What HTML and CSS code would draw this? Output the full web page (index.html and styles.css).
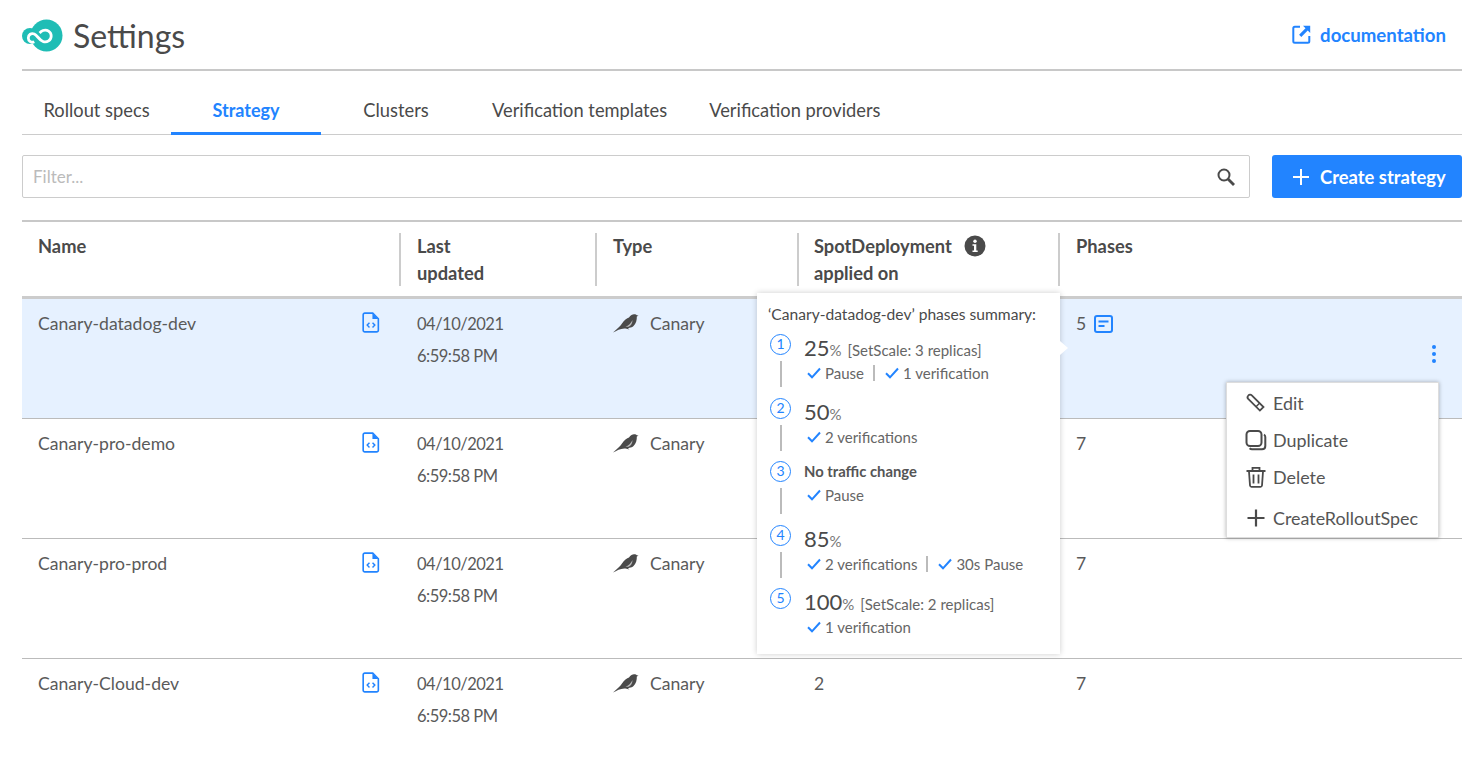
FILE: index.html
```html
<!DOCTYPE html>
<html>
<head>
  <title>Settings</title>
  <link rel="stylesheet" href="styles.css">
</head>
<body>
  <svg class="defs" width="0" height="0">
    <symbol id="file-code" viewBox="0 0 18 22">
      <path d="M2.500 1.200h8.300l5.900 5.900v12a1.700 1.700 0 0 1-1.700 1.700H2.500a1.700 1.700 0 0 1-1.700-1.700V2.900a1.700 1.700 0 0 1 1.700-1.700z" fill="none" stroke="#2284ff" stroke-width="1.700"/>
      <path d="M10.500 1.500v5.900h5.900z" fill="#2284ff"/>
      <path d="M7.400 11.200l-2.400 2.500 2.400 2.500M10.600 11.200l2.400 2.500-2.400 2.500" fill="none" stroke="#2284ff" stroke-width="1.500"/>
    </symbol>
    <symbol id="bird" viewBox="0 0 26 19">
      <path d="M0 18.500C4 15 7 12.500 9 9.500 11 6 14 4 16 3.500 17.500 1.500 19.500.3 21 .3c1.500 0 2.500.5 3 1l1.500.4-1.700.8c.2 3.500-.8 7-3.300 9.500-1 1-2.500 1.500-4 1.700l-1.500.5 1.500 1.300-4-1C8 14 4 16.500 0 18.500z" fill="#4a4a4a"/>
      <path d="M12.500 12.800c3-1 5.500-3.800 7-6.800 0 3-1.500 6-4 6.800z" fill="#bbb"/>
    </symbol>
    <symbol id="check" viewBox="0 0 14 12">
      <path d="M1 6.300l4 4L13 1.500" fill="none" stroke="#2284ff" stroke-width="2"/>
    </symbol>
  </svg>

  <div class="page">
    <header class="top-bar">
      <div class="brand">
        <svg class="logo" width="41" height="33" viewBox="0 0 41 33">
          <circle cx="8" cy="17" r="8" fill="#1fbdb5"/>
          <circle cx="24.500" cy="16.500" r="16" fill="#1fbdb5"/>
          <path d="M12.300 22.800c-2.800 1.300-6-.6-6-3.800 0-3.300 3-5.300 6-4 3 1.300 4.700 6 8.700 7.500 3.900 1.500 8.200-1.200 8.200-5.500s-4.300-7-8.200-5.500c-1.300.5-2.400 1.400-3.400 2.400" fill="none" stroke="#fff" stroke-width="2.800"/>
        </svg>
        <h1 class="title">Settings</h1>
      </div>
      <a class="doc-link">
        <svg width="19" height="19" viewBox="0 0 19 19">
          <path d="M8 1.800H2.800a1.500 1.500 0 0 0-1.500 1.500v12.900a1.500 1.500 0 0 0 1.500 1.500h13a1.500 1.500 0 0 0 1.500-1.500V11" fill="none" stroke="#2284ff" stroke-width="2"/>
          <path d="M11 .8h7.200V8l-2.500-2.500-6.400 6.400-2.200-2.200 6.400-6.400z" fill="#2284ff"/>
        </svg>
        documentation
      </a>
    </header>

    <nav class="tabs">
      <div class="tab">Rollout specs</div>
      <div class="tab active">Strategy</div>
      <div class="tab">Clusters</div>
      <div class="tab">Verification templates</div>
      <div class="tab">Verification providers</div>
    </nav>

    <div class="toolbar">
      <div class="filter">
        <span class="placeholder">Filter...</span>
        <svg width="20" height="20" viewBox="0 0 20 20">
          <circle cx="8" cy="8" r="5.500" fill="none" stroke="#4a4a4a" stroke-width="2"/>
          <path d="M12 12l6 6" stroke="#4a4a4a" stroke-width="2.800"/>
        </svg>
      </div>
      <button class="create-btn">
        <svg width="18" height="18" viewBox="0 0 18 18"><path d="M9 1v16M1 9h16" stroke="#fff" stroke-width="2"/></svg>
        Create strategy
      </button>
    </div>

    <div class="table">
      <div class="row head">
        <div class="th">Name</div>
        <div class="th">Last<br>updated</div>
        <div class="th">Type</div>
        <div class="th">
          <span class="th-line">SpotDeployment
            <svg width="22" height="22" viewBox="0 0 22 22">
              <circle cx="11" cy="11" r="10.500" fill="#4a4a4a"/>
              <circle cx="11" cy="6.200" r="1.700" fill="#fff"/>
              <path d="M8.500 9.300h3.800v6.200h1.400v1.400H8.500v-1.400h1.500v-4.800H8.500z" fill="#fff"/>
            </svg>
          </span><br>applied on
        </div>
        <div class="th">Phases</div>
      </div>

      <div class="row selected">
        <div class="td name">Canary-datadog-dev <svg class="file" width="18" height="21"><use href="#file-code"/></svg></div>
        <div class="td date">04/10/2021<br>6:59:58 PM</div>
        <div class="td type"><svg width="26" height="19"><use href="#bird"/></svg>Canary</div>
        <div class="td"></div>
        <div class="td phases">5
          <svg width="19" height="18" viewBox="0 0 19 18">
            <rect x="1" y="1" width="17" height="16" rx="2" fill="none" stroke="#2284ff" stroke-width="2"/>
            <path d="M4.500 6.500h10M4.500 11h6" stroke="#2284ff" stroke-width="2"/>
          </svg>
          <svg class="kebab" width="6" height="20" viewBox="0 0 6 20">
            <circle cx="3" cy="3" r="2" fill="#2284ff"/><circle cx="3" cy="10" r="2" fill="#2284ff"/><circle cx="3" cy="17" r="2" fill="#2284ff"/>
          </svg>
        </div>
      </div>

      <div class="row">
        <div class="td name">Canary-pro-demo <svg class="file" width="18" height="21"><use href="#file-code"/></svg></div>
        <div class="td date">04/10/2021<br>6:59:58 PM</div>
        <div class="td type"><svg width="26" height="19"><use href="#bird"/></svg>Canary</div>
        <div class="td"></div>
        <div class="td">7</div>
      </div>

      <div class="row">
        <div class="td name">Canary-pro-prod <svg class="file" width="18" height="21"><use href="#file-code"/></svg></div>
        <div class="td date">04/10/2021<br>6:59:58 PM</div>
        <div class="td type"><svg width="26" height="19"><use href="#bird"/></svg>Canary</div>
        <div class="td"></div>
        <div class="td">7</div>
      </div>

      <div class="row last">
        <div class="td name">Canary-Cloud-dev <svg class="file" width="18" height="21"><use href="#file-code"/></svg></div>
        <div class="td date">04/10/2021<br>6:59:58 PM</div>
        <div class="td type"><svg width="26" height="19"><use href="#bird"/></svg>Canary</div>
        <div class="td">2</div>
        <div class="td">7</div>
      </div>

      <div class="summary">
        <div class="summary-title">‘Canary-datadog-dev’ phases summary:</div>

        <div class="step">
          <div class="num">1</div>
          <div class="step-main"><b>25</b><i>%</i><span class="note">[SetScale: 3 replicas]</span></div>
          <div class="step-sub"><svg width="14" height="12"><use href="#check"/></svg>Pause<span class="sep"></span><svg width="14" height="12"><use href="#check"/></svg>1 verification</div>
        </div>
        <div class="step">
          <div class="num">2</div>
          <div class="step-main"><b>50</b><i>%</i></div>
          <div class="step-sub"><svg width="14" height="12"><use href="#check"/></svg>2 verifications</div>
        </div>
        <div class="step">
          <div class="num">3</div>
          <div class="step-main plain">No traffic change</div>
          <div class="step-sub"><svg width="14" height="12"><use href="#check"/></svg>Pause</div>
        </div>
        <div class="step">
          <div class="num">4</div>
          <div class="step-main"><b>85</b><i>%</i></div>
          <div class="step-sub"><svg width="14" height="12"><use href="#check"/></svg>2 verifications<span class="sep"></span><svg width="14" height="12"><use href="#check"/></svg>30s Pause</div>
        </div>
        <div class="step end">
          <div class="num">5</div>
          <div class="step-main"><b>100</b><i>%</i><span class="note">[SetScale: 2 replicas]</span></div>
          <div class="step-sub"><svg width="14" height="12"><use href="#check"/></svg>1 verification</div>
        </div>
      </div>

      <div class="menu">
        <div class="menu-item">
          <svg width="22" height="22" viewBox="0 0 22 22"><path d="M3.300 3.500c1-1.200 2.500-1.200 3.500-.2l11.700 11.700-3.600 3.600L3.200 6.900c-.9-1-.9-2.300.1-3.400z" fill="none" stroke="#4a4a4a" stroke-width="1.800"/><path d="M14.500 11.200l-3.500 3.500" stroke="#4a4a4a" stroke-width="1.500"/></svg>
          Edit
        </div>
        <div class="menu-item">
          <svg width="22" height="22" viewBox="0 0 22 22"><rect x="1.500" y="2" width="15" height="15" rx="3.500" fill="none" stroke="#4a4a4a" stroke-width="2"/><path d="M19 5.500c.8.500 1.300 1.300 1.300 2.500v9c0 2-1.300 3.300-3.300 3.300H7c-1 0-1.800-.4-2.400-1" fill="none" stroke="#4a4a4a" stroke-width="2"/></svg>
          Duplicate
        </div>
        <div class="menu-item">
          <svg width="22" height="22" viewBox="0 0 22 22"><path d="M1.500 5h19M7.500 4.500V1.800h7v2.700M4 5.500l1 14a1.500 1.500 0 0 0 1.500 1.300h9a1.500 1.500 0 0 0 1.500-1.300l1-14M8.500 8.500v9M13.500 8.500v9" fill="none" stroke="#4a4a4a" stroke-width="1.800"/></svg>
          Delete
        </div>
        <div class="menu-item">
          <svg width="22" height="22" viewBox="0 0 22 22"><path d="M11 2.500v17M2.500 11h17" stroke="#4a4a4a" stroke-width="2.200"/></svg>
          CreateRolloutSpec
        </div>
      </div>
    </div>
  </div>
</body>
</html>
```

FILE: styles.css
```css
body {
  margin: 0;
  font-family: "Lato", sans-serif;
  color: #555;
  background: #fff;
}
.defs {
  position: absolute;
}
.page {
  padding: 0 20px 0 22px;
}
.top-bar {
  display: flex;
  justify-content: space-between;
  align-items: center;
  height: 69px;
  border-bottom: 2px solid #c8c8c8;
}
.brand {
  display: flex;
  align-items: center;
  gap: 10px;
  margin-top: 2px;
}
.title {
  margin: 0;
  font-size: 32px;
  font-weight: 400;
  color: #4a4a4a;
}
.doc-link {
  display: flex;
  align-items: center;
  gap: 9px;
  margin-right: 16px;
  font-size: 18.600px;
  font-weight: 700;
  color: #2284ff;
}
.tabs {
  display: flex;
  height: 63px;
  border-bottom: 1px solid #ccc;
}
.tab {
  min-width: 150px;
  box-sizing: border-box;
  padding: 0 21px;
  margin-bottom: -1px;
  line-height: 79px;
  height: 64px;
  text-align: center;
  font-size: 18.300px;
  color: #4a4a4a;
}
.tab:first-child {
  min-width: 149px;
}
.tab.active {
  color: #2284ff;
  font-size: 18px;
  font-weight: 700;
  border-bottom: 3px solid #2284ff;
}
.toolbar {
  display: flex;
  gap: 22px;
  margin-top: 20px;
}
.filter {
  flex: 1;
  height: 43px;
  box-sizing: border-box;
  display: flex;
  justify-content: space-between;
  align-items: center;
  padding: 0 13px 0 10px;
  border: 1px solid #ccc;
  border-radius: 2px;
}
.placeholder {
  font-size: 17px;
  color: #bbb;
}
.create-btn {
  width: 190px;
  height: 43px;
  display: flex;
  align-items: center;
  gap: 10px;
  padding: 0 0 0 20px;
  border: none;
  border-radius: 3px;
  background: #2284ff;
  color: #fff;
  font-family: inherit;
  font-size: 18.400px;
  font-weight: 700;
}
.table {
  position: relative;
  margin-top: 22px;
  border-top: 2px solid #c8c8c8;
}
.row {
  display: grid;
  grid-template-columns: 377px 196px 202px 261px 404px;
  height: 119px;
  border-bottom: 1px solid #bbb;
}
.row.last {
  border-bottom: none;
}
.row.head {
  height: 74px;
  border-bottom: 3px solid #ccc;
}
.row.selected {
  background: #e6f1ff;
}
.th {
  margin-top: 11px;
  height: 53px;
  padding-left: 16px;
  font-size: 18.300px;
  line-height: 26.500px;
  font-weight: 700;
  color: #4a4a4a;
  border-left: 2px solid #ccc;
}
.th:first-child {
  border-left: none;
}
.th:nth-child(4) {
  padding-left: 15px;
}
.th-line svg {
  vertical-align: -4px;
  margin-left: 8px;
}
.td {
  position: relative;
  padding: 9px 16px 0 18px;
  font-size: 17.600px;
  line-height: 32px;
  color: #5a5a5a;
}
.td:first-child {
  padding-left: 16px;
}
.td:nth-child(4) {
  padding-left: 17px;
}
.date {
  font-size: 16.500px;
  letter-spacing: -.5px;
}
.name {
  display: flex;
  justify-content: space-between;
  align-items: flex-start;
  padding-right: 19px;
}
.name .file {
  margin-top: 4px;
}
.type {
  display: flex;
  align-items: flex-start;
  gap: 11px;
}
.type svg {
  margin-top: 6px;
}
.phases svg {
  vertical-align: -3px;
  margin-left: 3px;
}
.phases .kebab {
  position: absolute;
  top: 45px;
  right: 25px;
}
.summary {
  position: absolute;
  left: 735px;
  top: 71px;
  width: 303px;
  height: 361px;
  box-sizing: border-box;
  padding: 12px 10px 0 11px;
  background: #fff;
  box-shadow: 0 0 6px rgba(0, 0, 0, .2);
}
.summary::after {
  content: "";
  position: absolute;
  right: -8px;
  top: 48px;
  border-left: 8px solid #fff;
  border-top: 7px solid transparent;
  border-bottom: 7px solid transparent;
}
.summary-title {
  font-size: 15.600px;
  line-height: 18px;
  color: #4a4a4a;
  margin-bottom: 11px;
}
.step {
  position: relative;
  height: 63.500px;
  padding-left: 36px;
  box-sizing: border-box;
}
.step::after {
  content: "";
  position: absolute;
  left: 12px;
  top: 27px;
  height: 26px;
  width: 2px;
  background: #bbb;
}
.step.end::after {
  display: none;
}
.num {
  position: absolute;
  left: 2px;
  top: 0;
  width: 21px;
  height: 21px;
  box-sizing: border-box;
  border: 1.500px solid #2284ff;
  border-radius: 50%;
  text-align: center;
  font-size: 14px;
  line-height: 18px;
  color: #2284ff;
}
.step-main {
  height: 29px;
  line-height: 27px;
  font-size: 15px;
  white-space: nowrap;
}
.step-main b {
  font-size: 22px;
  font-weight: 400;
  color: #4a4a4a;
}
.step-main i {
  font-style: normal;
  font-size: 15px;
  color: #777;
}
.step-main.plain {
  font-weight: 700;
  font-size: 14.800px;
  height: 21px;
  line-height: 21px;
  margin-bottom: 3px;
  color: #555;
}
.note {
  margin-left: 6px;
  font-size: 15px;
  color: #666;
}
.step-sub {
  display: flex;
  align-items: center;
  gap: 4px;
  padding-left: 3px;
  font-size: 15px;
  line-height: 20px;
  color: #666;
}
.sep {
  width: 2px;
  height: 16px;
  margin: 0 6px 0 5px;
  background: #bbb;
}
.menu {
  position: absolute;
  left: 1204px;
  top: 160px;
  width: 213px;
  height: 156px;
  box-sizing: border-box;
  padding: 1px 0 0 18px;
  background: #fff;
  border: 1px solid #ddd;
  box-shadow: 0 0 4px rgba(0, 0, 0, .3);
}
.menu-item {
  display: flex;
  align-items: center;
  gap: 6px;
  height: 37.300px;
  font-size: 17.900px;
  color: #555;
}
.menu-item:last-child {
  height: 40px;
  margin-top: 2px;
}
```
